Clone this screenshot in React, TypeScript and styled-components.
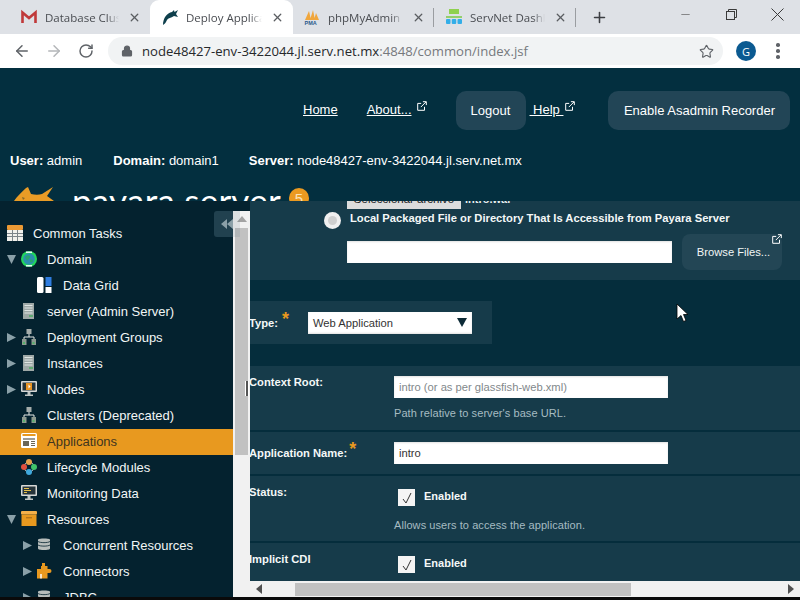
import React from "react";
import styled, { createGlobalStyle } from "styled-components";
import { ArrowLeft, ArrowRight, RotateCw, Lock, Star, X, Plus, Minus } from "lucide-react";

const Global = createGlobalStyle`
  html, body { margin: 0; padding: 0; background: #032f3f; }
  * { box-sizing: border-box; }
`;

const Screen = styled.div`
  width: 800px; height: 600px; overflow: hidden; display: flex; flex-direction: column;
  position: relative; font-family: "Liberation Sans", Arial, sans-serif; background: #032f3f;
`;
const TabStrip = styled.div`
  height: 34px; background: #dee1e6; display: flex; align-items: stretch; flex: none;
  font-family: "Open Sans", sans-serif; font-size: 11.5px; color: #4a4d52;
`;
const Tab = styled.div<{ $w: number; $pl: number; $active?: boolean; $sep?: boolean }>`
  width: ${p => p.$w}px; padding: 0 9px 0 ${p => p.$pl}px; display: flex; align-items: center; gap: 8px; position: relative;
  background: ${p => (p.$active ? "#ffffff" : "transparent")};
  border-radius: ${p => (p.$active ? "9px 9px 0 0" : "0")};
  ${p => p.$sep ? `&::after { content: ""; position: absolute; right: 0; top: 8px; height: 19px; width: 1px; background: #9a9da1; }` : ""}
`;
const TabIcon = styled.span`
  width: 16px; height: 16px; flex: none; display: flex;
`;
const TabTitle = styled.span`
  flex: 1; min-width: 0; overflow: hidden; white-space: nowrap; margin-right: 1px;
  -webkit-mask-image: linear-gradient(to right, #000 calc(100% - 12px), transparent 100%);
  mask-image: linear-gradient(to right, #000 calc(100% - 12px), transparent 100%);
`;
const NewTab = styled.span`
  margin-left: 15px; display: flex; align-items: center; color: #3c3f43;
`;
const WindowButtons = styled.div`
  margin-left: auto; display: flex; height: 28px; color: #3a3a3a;
`;
const WindowButton = styled.span`
  width: 46px; display: flex; align-items: center; justify-content: center;
`;
const Toolbar = styled.div`
  height: 34px; background: #ffffff; display: flex; align-items: center; padding-left: 6px; flex: none;
`;
const NavButton = styled.span<{ $off?: boolean }>`
  width: 32px; display: flex; justify-content: center; color: ${p => (p.$off ? "#b4b6b9" : "#5f6368")};
`;
const Omnibox = styled.div`
  margin-left: 6px; width: 615px; height: 28px; border-radius: 14px; background: #f1f3f4; display: flex; align-items: center;
  padding: 0 9px 0 13px; font-family: "Open Sans", sans-serif; font-size: 13.15px; color: #76797d; white-space: nowrap;
`;
const LockIcon = styled.span`
  display: flex; margin-right: 9px; color: #5f6368;
`;
const Host = styled.span`
  color: #26282b;
`;
const StarIcon = styled.span`
  margin-left: auto; display: flex; color: #5f6368;
`;
const Avatar = styled.span`
  margin-left: 13px; width: 20px; height: 20px; border-radius: 50%; background: #0b5a91; color: #fff; font-size: 11px;
  display: flex; align-items: center; justify-content: center; font-family: "Open Sans", sans-serif;
`;
const Kebab = styled.span`
  margin-left: 20px; display: flex; flex-direction: column; gap: 2.5px;
  & > i { display: block; width: 3.5px; height: 3.5px; border-radius: 50%; background: #5f6368; }
`;
const Header = styled.header`
  height: 133px; overflow: hidden; flex: none; color: #fff; font-size: 13px; background: #032f3f;
`;
const NavRow = styled.nav`
  height: 62px; padding: 23px 0 0 303px; display: flex; align-items: flex-start;
`;
const NavLink = styled.a<{ $ml?: number }>`
  margin: 11px 0 0 ${p => p.$ml || 0}px; color: #fff; text-decoration: underline; white-space: pre; line-height: 16px;
`;
const ExtMark = styled.span<{ $ml?: number }>`
  display: flex; margin: 10px 0 0 ${p => p.$ml ?? 3}px;
`;
const NavButtonBox = styled.span<{ $w: number; $ml: number }>`
  width: ${p => p.$w}px; margin-left: ${p => p.$ml}px; height: 39px; border-radius: 10px; background: #224556; color: #fff;
  display: flex; align-items: center; justify-content: center; white-space: nowrap;
`;
const UserRow = styled.div`
  display: flex; padding-left: 10px; height: 16px; margin-top: 23px; line-height: 16px; white-space: pre;
`;
const UserItem = styled.span<{ $ml?: number }>`
  margin-left: ${p => p.$ml || 0}px;
  & > b { font-weight: 700; }
`;
const BrandRow = styled.div`
  display: flex; align-items: flex-start; padding-left: 13px; margin-top: 17px;
`;
const BrandName = styled.span`
  margin-left: 17px; font-family: "Lato", sans-serif; font-size: 35px; line-height: 40px; margin-top: -6px; white-space: nowrap; letter-spacing: .25px;
`;
const Badge = styled.span`
  margin: 2px 0 0 8px; width: 20px; height: 20px; border-radius: 50%; background: #eb9a21; color: #fbe3b8; font-size: 15px;
  display: flex; align-items: center; justify-content: center; flex: none;
`;
const Main = styled.main`
  height: 396px; flex: none; display: flex; overflow: hidden; position: relative;
`;
const Sidebar = styled.aside`
  width: 250px; flex: none; display: flex; background: #04222f; position: relative;
`;
const Tree = styled.ul`
  width: 233px; margin: 0; padding: 20px 0 0; list-style: none; color: #f2f6f6; font-size: 13px;
`;
const TreeRow = styled.li<{ $pl: number; $selected?: boolean }>`
  height: 26px; display: flex; align-items: center; padding: 0 0 2px ${p => p.$pl}px; white-space: nowrap;
  background: ${p => (p.$selected ? "#e8991f" : "transparent")};
  color: ${p => (p.$selected ? "#40351f" : "inherit")};
`;
const Arrow = styled.span`
  width: 16px; height: 16px; flex: none; display: flex; align-items: center; padding-left: 1px;
`;
const TreeIcon = styled.span`
  width: 16px; height: 16px; flex: none; display: flex; margin-right: 10px;
`;
const VScroll = styled.div`
  width: 17px; margin-top: 10px; background: #f1f1f1; display: flex; flex-direction: column; align-items: center; flex: none;
`;
const ScrollArrowBox = styled.span`
  height: 17px; flex: none; display: flex; align-items: center; justify-content: center; padding-bottom: 2px;
`;
const VThumb = styled.div`
  width: 13px; height: 227px; background: #c1c1c1;
`;
const Collapse = styled.div`
  position: absolute; left: 214px; top: 10px; width: 26px; height: 26px; border-radius: 3px 0 0 3px;
  background: linear-gradient(to right, #21414f 19px, rgba(72,102,116,.12) 19px);
  display: flex; align-items: center; padding-left: 7px;
`;
const Resizer = styled.div`
  position: absolute; left: 245px; top: 180px; width: 4px; height: 15px; border-left: 1px solid #fff; border-right: 1px solid #fff; background: #555;
`;
const Content = styled.section`
  flex: 1; min-width: 0; display: flex; flex-direction: column; color: #fff; font-size: 11.2px; background: #052d3c;
`;
const Scroller = styled.div`
  flex: 1; min-height: 0; display: flex; flex-direction: column;
`;
const SourcePanel = styled.div`
  background: #163b4a; padding-bottom: 10px; flex: none; height: 79px;
`;
const FileRow = styled.div`
  margin-top: -12px; height: 20px; padding-left: 97px; display: flex; align-items: center; color: #e8eef0; font-weight: 700; font-size: 11px;
`;
const FileButton = styled.span`
  width: 114px; height: 20px; background: #dcdcdc; color: #222; font-weight: 400; font-size: 11.500px; display: flex; align-items: center; justify-content: center; margin-right: 4px;
`;
const RadioRow = styled.div`
  margin-top: 3px; height: 18px; padding-left: 74px; display: flex; align-items: flex-start; gap: 9px; font-weight: 700;
  color: #f4f8f8; line-height: 13px;
`;
const Radio = styled.span`
  width: 17px; height: 17px; border-radius: 50%; background: #f0f0f0; flex: none; display: flex; align-items: center; justify-content: center;
  &::after { content: ""; width: 9px; height: 9px; border-radius: 50%; background: #cfcfcf; }
`;
const BrowseRow = styled.div`
  margin-top: 4px; padding-left: 97px; display: flex; align-items: center; gap: 10px;
`;
const TextBox = styled.div<{ $w?: number; $muted?: boolean }>`
  width: ${p => p.$w || 274}px; height: 22px; background: #fff; box-shadow: inset 0 1px 2px rgba(0,0,0,.12); padding-left: 5px;
  display: flex; align-items: center; font-size: 11.2px; color: ${p => (p.$muted ? "#82888b" : "#333")}; white-space: nowrap;
`;
const BrowseButton = styled.span`
  width: 100px; height: 36px; border-radius: 8px; background: #234655; color: #f2f6f6; font-size: 11.2px; display: flex; align-items: center; justify-content: center; position: relative; padding-left: 3px;
`;
const CornerMark = styled.span`
  position: absolute; right: 0; top: 0; display: flex;
`;
const TypePanel = styled.div`
  margin: 21px 0 22px; width: 242px; height: 43px; background: #163b4a; flex: none; display: grid; grid-template-columns: 58px 164px; align-items: center;
`;
const Label = styled.label`
  margin-left: -1px; font-weight: 700; color: #f4f8f8; line-height: 14px; white-space: nowrap; display: block;
`;
const Required = styled.span<{ $ml?: number }>`
  color: #e8991f; font-size: 18px; font-weight: 700; line-height: 10px; position: relative; top: -2px; margin-left: ${p => p.$ml ?? 2}px;
`;
const SelectBox = styled.div`
  width: 164px; height: 22px; background: #fff; color: #333; font-size: 11.2px; display: flex; align-items: center; justify-content: space-between; padding: 0 5px;
  box-shadow: inset 0 -1px 2px rgba(0,0,0,.12);
`;
const Rows = styled.div`
  flex: 1; display: flex; flex-direction: column; gap: 2px; min-height: 0;
`;
const FormRow = styled.div<{ $h?: number; $center?: boolean }>`
  background: #163b4a; display: grid; grid-template-columns: 144px 1fr; flex: ${p => (p.$h ? "none" : "1")};
  height: ${p => (p.$h ? `${p.$h}px` : "auto")}; padding-top: ${p => (p.$center ? 0 : 9)}px;
  align-items: ${p => (p.$center ? "center" : "start")};
`;
const Field = styled.div<{ $pt?: number; $pl?: number }>`
  padding-top: ${p => p.$pt || 0}px; padding-left: ${p => p.$pl || 0}px;
`;
const Hint = styled.div<{ $mt: number; $ml?: number }>`
  margin: ${p => p.$mt}px 0 0 ${p => p.$ml || 0}px; color: #a6bcc2; font-size: 11px; line-height: 14px; letter-spacing: .07px; white-space: nowrap;
`;
const CheckRow = styled.div`
  display: flex; align-items: flex-start; gap: 9px; font-weight: 700; color: #f4f8f8; font-size: 11px; line-height: 14px;
`;
const Check = styled.span`
  width: 17px; height: 17px; background: #f4f4f4; display: flex; align-items: center; justify-content: center; flex: none;
`;
const HScroll = styled.div`
  height: 16px; flex: none; background: #f1f1f1; display: flex; align-items: center; position: relative; padding: 0 6px;
`;
const HThumb = styled.div`
  margin-left: 33px; width: 336px; height: 13px; background: #c1c1c1;
`;
const HEnd = styled.span`
  margin-left: auto; display: flex;
`;
const BottomEdge = styled.div`
  height: 3px; background: #0a0a0a; flex: none;
`;
const Cursor = styled.svg`
  position: absolute; left: 676px; top: 303px;
`;

const Ext = () => (
  <svg width="10" height="10" viewBox="0 0 10 10" fill="none" stroke="#fff" strokeWidth="1">
    <path d="M7.5 5.8V9.3H.7V2.4H4.2" />
    <path d="M3.8 6.1 9 .9M5.9.7h3.4v3.4" />
  </svg>
);
const Tri = ({ d = "right", c = "#8aa0a8" }: { d?: "right" | "down"; c?: string }) => (
  <svg width="11" height="11" viewBox="0 0 11 11">
    <path fill={c} d={d === "right" ? "M1 1l9 4.5L1 10z" : "M1 1h9l-4.5 9z"} />
  </svg>
);
const CalendarIco = () => (
  <svg width="16" height="16" viewBox="0 0 16 16">
    <rect y="0" width="16" height="5" rx="1" fill="#eb9a35" />
    <rect y="5" width="16" height="11" fill="#f1f1ec" />
    <path stroke="#7b8488" strokeWidth="1" d="M0 8.5h16M0 11.5h16M5.5 5v11M10.5 5v11" />
  </svg>
);
const GlobeIco = () => (
  <svg width="16" height="16" viewBox="0 0 16 16">
    <circle cx="8" cy="8" r="8" fill="#22d65c" />
    <circle cx="8" cy="8" r="5.8" fill="#2b8fb0" />
    <path fill="#27a56e" d="M4 6c2-2 4-2 5-1s-1 3-2 4-2 0-3-3zM9 9c2-1 3 0 3 1s-2 2-3 1z" />
    <path fill="#e6f7f2" d="M5 0.6h6v1.4H5zM5 14h6v1.4H5z" />
  </svg>
);
const GridIco = () => (
  <svg width="16" height="16" viewBox="0 0 16 16">
    <rect x="0" y="0" width="6.5" height="16" rx="1.5" fill="#fff" />
    <rect x="8.5" y="0" width="6" height="9" fill="#2f7de0" />
    <rect x="8.5" y="10" width="6" height="6" fill="#fff" />
  </svg>
);
const ServerIco = () => (
  <svg width="16" height="16" viewBox="0 0 16 16">
    <rect x="2" y="0" width="11" height="16" fill="#9ea8a6" />
    <path stroke="#dfe4e2" strokeWidth="1" d="M3.5 2.5h8M3.5 5h8M3.5 7.5h8M3.5 10h8" />
    <rect x="8" y="12" width="4" height="2" fill="#5faa72" />
  </svg>
);
const ClusterIco = () => (
  <svg width="16" height="16" viewBox="0 0 16 16">
    <rect x="5.5" y="0" width="5" height="5" fill="#a5adab" />
    <path stroke="#e4e8e6" strokeWidth="1" fill="none" d="M8 5v3M3 10V8h10v2" />
    <rect x="1" y="10" width="4.5" height="6" fill="#8d9a90" />
    <rect x="10.5" y="10" width="4.5" height="6" fill="#8d9a90" />
    <rect x="2" y="13" width="2" height="2" fill="#55b26c" />
    <rect x="11.5" y="13" width="2" height="2" fill="#55b26c" />
  </svg>
);
const NodeIco = () => (
  <svg width="16" height="16" viewBox="0 0 16 16">
    <rect x="0" y="0" width="16" height="11" rx="1" fill="#d6d8d6" />
    <rect x="1.5" y="1.5" width="13" height="8" fill="#26343a" />
    <rect x="5" y="2" width="6" height="7" fill="#e79322" />
    <path d="M7.5 3.5v4l2-2z" fill="#fff" />
    <path fill="#bfc4c2" d="M6.5 11h3v2.5h-3zM4 13.5h8v1.5H4z" />
  </svg>
);
const AppIco = () => (
  <svg width="16" height="16" viewBox="0 0 16 16">
    <rect width="16" height="15" rx="1.5" fill="#fff" />
    <rect x="1.5" y="1" width="13" height="2" fill="#e8991f" />
    <path stroke="#5a5a50" strokeWidth="1.2" d="M2 6h12" />
    <rect x="2" y="8" width="6" height="5" fill="#6b6657" />
    <path stroke="#6b6657" strokeWidth="1.2" d="M10 8.5h4M10 10.5h4M10 12.5h4" />
  </svg>
);
const LifeIco = () => (
  <svg width="16" height="16" viewBox="0 0 16 16">
    <circle cx="8" cy="8" r="5" fill="none" stroke="#cfd6d6" strokeWidth="1" />
    <circle cx="8" cy="3" r="3" fill="#e8a14a" />
    <circle cx="3" cy="8" r="3" fill="#e0503f" />
    <circle cx="13" cy="8" r="3" fill="#3fc46a" />
    <circle cx="8" cy="13" r="3" fill="#3fa9dd" />
  </svg>
);
const MonitorIco = () => (
  <svg width="16" height="16" viewBox="0 0 16 16">
    <rect width="16" height="11" rx="1" fill="#d6d8d6" />
    <rect x="1.5" y="1.5" width="13" height="8" fill="#26343a" />
    <path stroke="#e6c14c" strokeWidth="1" d="M3 3.5h5M3 5.5h7M3 7.5h3" />
    <path fill="#bfc4c2" d="M6.5 11h3v2.5h-3zM4 13.5h8v1.5H4z" />
  </svg>
);
const BoxIco = () => (
  <svg width="16" height="16" viewBox="0 0 16 16">
    <rect width="16" height="3.5" rx="1" fill="#f4b04a" />
    <rect x="0.5" y="3.5" width="15" height="11.5" fill="#e8991f" />
    <rect x="5" y="6" width="6" height="1.4" fill="#b4741a" />
  </svg>
);
const DbIco = () => (
  <svg width="14" height="14" viewBox="0 0 14 14">
    <path fill="#b7bdbb" d="M1 2.5C1 1 13 1 13 2.5v9C13 13.5 1 13.5 1 11.5z" />
    <path fill="none" stroke="#04222f" strokeWidth=".8" d="M1 4.5c2 1.5 10 1.5 12 0M1 8c2 1.5 10 1.5 12 0" />
  </svg>
);
const PuzzleIco = () => (
  <svg width="16" height="16" viewBox="0 0 16 16">
    <path fill="#e8991f" d="M5 0h3v3h2.5v3h2a2 2 0 1 1 0 4h-2v5.500H0V6h4V3h1z" />
    <path fill="#fff" d="M3 11h2v4.500H3z" opacity=".75" />
  </svg>
);
const BrandFish = () => (
  <svg width="42" height="30" viewBox="0 0 42 30">
    <path fill="#e99c26" d="M1 15C4 10 9 6 13 2l2-1 3 7c4 1 8 1 11 0L40 1l-6 9 7 5-6 6c-6 4-14 4-20 1L6 26 8 20z" />
    <path fill="#8a6a2a" d="M9 11l3 1-2 2z" />
  </svg>
);
const TabFish = () => (
  <svg width="16" height="16" viewBox="0 0 16 16">
    <path fill="#0e3f4c" d="M1 16C1 9 5 4 10 3l2-2 .5 2L16 1l-2 4 2 3-4-1C9 9 6 9 5 11 4 13 3 15 1 16z" />
  </svg>
);

const rows: { pl: number; arrow?: "right" | "down"; icon: React.ReactNode; text: string; selected?: boolean; noSlot?: boolean }[] = [
  { pl: 7, noSlot: true, icon: <CalendarIco />, text: "Common Tasks" },
  { pl: 5, arrow: "down", icon: <GlobeIco />, text: "Domain" },
  { pl: 21, icon: <GridIco />, text: "Data Grid" },
  { pl: 5, icon: <ServerIco />, text: "server (Admin Server)" },
  { pl: 5, arrow: "right", icon: <ClusterIco />, text: "Deployment Groups" },
  { pl: 5, arrow: "right", icon: <ServerIco />, text: "Instances" },
  { pl: 5, arrow: "right", icon: <NodeIco />, text: "Nodes" },
  { pl: 5, icon: <ClusterIco />, text: "Clusters (Deprecated)" },
  { pl: 5, icon: <AppIco />, text: "Applications", selected: true },
  { pl: 5, icon: <LifeIco />, text: "Lifecycle Modules" },
  { pl: 5, icon: <MonitorIco />, text: "Monitoring Data" },
  { pl: 5, arrow: "down", icon: <BoxIco />, text: "Resources" },
  { pl: 21, arrow: "right", icon: <DbIco />, text: "Concurrent Resources" },
  { pl: 21, arrow: "right", icon: <PuzzleIco />, text: "Connectors" },
  { pl: 21, arrow: "right", icon: <DbIco />, text: "JDBC" },
];

const Close = () => <X size={13} strokeWidth={2.4} color="#5a5d61" style={{ flex: "none" }} />;

export default function App() {
  return (
    <Screen>
      <Global />
      <TabStrip>
        <Tab $w={150} $pl={21}>
          <TabIcon>
            <svg width="16" height="16" viewBox="0 0 16 16"><path fill="none" stroke="#c0393a" strokeWidth="2.6" d="M1.500 14V3.500L8 9l6.500-5.500V14" /></svg>
          </TabIcon>
          <TabTitle>Database Cluster</TabTitle>
          <Close />
        </Tab>
        <Tab $w={143} $pl={12} $active>
          <TabIcon><TabFish /></TabIcon>
          <TabTitle>Deploy Applications</TabTitle>
          <Close />
        </Tab>
        <Tab $w={141} $pl={11} $sep>
          <TabIcon>
            <svg width="16" height="16" viewBox="0 0 16 16">
              <path fill="#f0a63c" d="M1 11 5 2l2 9zM6 11 9 1l2 10zM10 11l2-7 3 7z" />
              <text x="0.500" y="15.500" fontSize="5.500" fontWeight="700" fill="#2b5a8c" fontFamily="Liberation Sans">PMA</text>
            </svg>
          </TabIcon>
          <TabTitle>phpMyAdmin</TabTitle>
          <Close />
        </Tab>
        <Tab $w={142} $pl={12} $sep>
          <TabIcon>
            <svg width="16" height="16" viewBox="0 0 16 16">
              <rect x="3" y="0" width="10" height="5" fill="#8fd14f" />
              <path stroke="#7ac943" strokeWidth="1.500" d="M0 8h16" />
              <rect x="0" y="10" width="4.500" height="5" rx="1" fill="#33aee8" />
              <rect x="5.750" y="10" width="4.500" height="5" rx="1" fill="#33aee8" />
              <rect x="11.500" y="10" width="4.500" height="5" rx="1" fill="#33aee8" />
            </svg>
          </TabIcon>
          <TabTitle>ServNet Dashboard</TabTitle>
          <Close />
        </Tab>
        <NewTab><Plus size={17} strokeWidth={2.2} /></NewTab>
        <WindowButtons>
          <WindowButton><Minus size={13} strokeWidth={1} /></WindowButton>
          <WindowButton>
            <svg width="11" height="11" viewBox="0 0 11 11" fill="none" stroke="#3a3a3a"><rect x=".5" y="2.500" width="8" height="8" /><path d="M2.500 2.500V.5h8v8h-2" /></svg>
          </WindowButton>
          <WindowButton>
            <svg width="13" height="13" viewBox="0 0 13 13" stroke="#3a3a3a"><path d="M.5.5l12 12M12.500.5l-12 12" /></svg>
          </WindowButton>
        </WindowButtons>
      </TabStrip>
      <Toolbar>
        <NavButton><ArrowLeft size={18} strokeWidth={2} /></NavButton>
        <NavButton $off><ArrowRight size={18} strokeWidth={2} /></NavButton>
        <NavButton><RotateCw size={16} strokeWidth={2.2} /></NavButton>
        <Omnibox>
          <LockIcon><Lock size={12} strokeWidth={2.4} fill="#5f6368" /></LockIcon>
          <Host>node48427-env-3422044.jl.serv.net.mx</Host>:4848/common/index.jsf
          <StarIcon><Star size={15} strokeWidth={1.8} /></StarIcon>
        </Omnibox>
        <Avatar>G</Avatar>
        <Kebab><i /><i /><i /></Kebab>
      </Toolbar>
      <Header>
        <NavRow>
          <NavLink>Home</NavLink>
          <NavLink $ml={29}>About...</NavLink>
          <ExtMark $ml={5}><Ext /></ExtMark>
          <NavButtonBox $w={70} $ml={29}>Logout</NavButtonBox>
          <NavLink $ml={4}>{" Help "}</NavLink>
          <ExtMark $ml={2}><Ext /></ExtMark>
          <NavButtonBox $w={182} $ml={33}>Enable Asadmin Recorder</NavButtonBox>
        </NavRow>
        <UserRow>
          <UserItem><b>User:</b> admin</UserItem>
          <UserItem $ml={31}><b>Domain:</b> domain1</UserItem>
          <UserItem $ml={30}><b>Server:</b> node48427-env-3422044.jl.serv.net.mx</UserItem>
        </UserRow>
        <BrandRow>
          <BrandFish />
          <BrandName>payara server</BrandName>
          <Badge>5</Badge>
        </BrandRow>
      </Header>
      <Main>
        <Sidebar>
          <Tree>
            {rows.map(r => (
              <TreeRow key={r.text + r.pl} $pl={r.pl} $selected={r.selected}>
                {!r.noSlot && <Arrow>{r.arrow && <Tri d={r.arrow} />}</Arrow>}
                <TreeIcon>{r.icon}</TreeIcon>
                {r.text}
              </TreeRow>
            ))}
          </Tree>
          <VScroll>
            <ScrollArrowBox>
              <svg width="10" height="6" viewBox="0 0 10 6"><path d="M5 0l5 6H0z" fill="#a3a3a3" /></svg>
            </ScrollArrowBox>
            <VThumb />
          </VScroll>
          <Collapse>
            <svg width="12" height="10" viewBox="0 0 12 10"><path fill="#8ba0a8" d="M6 0v10L0 5zM12 0v10L6 5z" /></svg>
          </Collapse>
          <Resizer />
        </Sidebar>
        <Content>
          <Scroller>
            <SourcePanel>
              <FileRow><FileButton>Seleccionar archivo</FileButton>intro.war</FileRow>
              <RadioRow><Radio />Local Packaged File or Directory That Is Accessible from Payara Server</RadioRow>
              <BrowseRow>
                <TextBox $w={325} />
                <BrowseButton>Browse Files...<CornerMark><Ext /></CornerMark></BrowseButton>
              </BrowseRow>
            </SourcePanel>
            <TypePanel>
              <Label>Type:<Required $ml={4}>*</Required></Label>
              <SelectBox>
                Web Application
                <svg width="10" height="9" viewBox="0 0 10 9"><path d="M0 0h10L5 9z" fill="#0c2a36" /></svg>
              </SelectBox>
            </TypePanel>
            <Rows>
              <FormRow $h={64}>
                <Label>Context Root:</Label>
                <Field $pt={1}>
                  <TextBox $muted>intro (or as per glassfish-web.xml)</TextBox>
                  <Hint $mt={8}>Path relative to server's base URL.</Hint>
                </Field>
              </FormRow>
              <FormRow $h={42} $center>
                <Label>Application Name:<Required>*</Required></Label>
                <Field><TextBox>intro</TextBox></Field>
              </FormRow>
              <FormRow $h={65}>
                <Label>Status:</Label>
                <Field $pt={4} $pl={4}>
                  <CheckRow>
                    <Check><svg width="12" height="12" viewBox="0 0 12 12" fill="none" stroke="#333" strokeWidth="1"><path d="M2 7l3 4 5-10" /></svg></Check>
                    Enabled
                  </CheckRow>
                  <Hint $mt={12} $ml={-4}>Allows users to access the application.</Hint>
                </Field>
              </FormRow>
              <FormRow>
                <Label>Implicit CDI</Label>
                <Field $pt={4} $pl={4}>
                  <CheckRow>
                    <Check><svg width="12" height="12" viewBox="0 0 12 12" fill="none" stroke="#333" strokeWidth="1"><path d="M2 7l3 4 5-10" /></svg></Check>
                    Enabled
                  </CheckRow>
                </Field>
              </FormRow>
            </Rows>
          </Scroller>
          <HScroll>
            <svg width="6" height="10" viewBox="0 0 6 10"><path d="M6 0v10L0 5z" fill="#505050" /></svg>
            <HThumb />
            <HEnd><svg width="6" height="10" viewBox="0 0 6 10"><path d="M0 0v10l6-5z" fill="#505050" /></svg></HEnd>
          </HScroll>
        </Content>
      </Main>
      <BottomEdge />
      <Cursor width="13" height="20" viewBox="0 0 13 20">
        <path d="M1 1v15l4-3.500 2.500 6 2.500-1-2.500-6H12z" fill="#fff" stroke="#000" strokeWidth=".8" />
      </Cursor>
    </Screen>
  );
}
